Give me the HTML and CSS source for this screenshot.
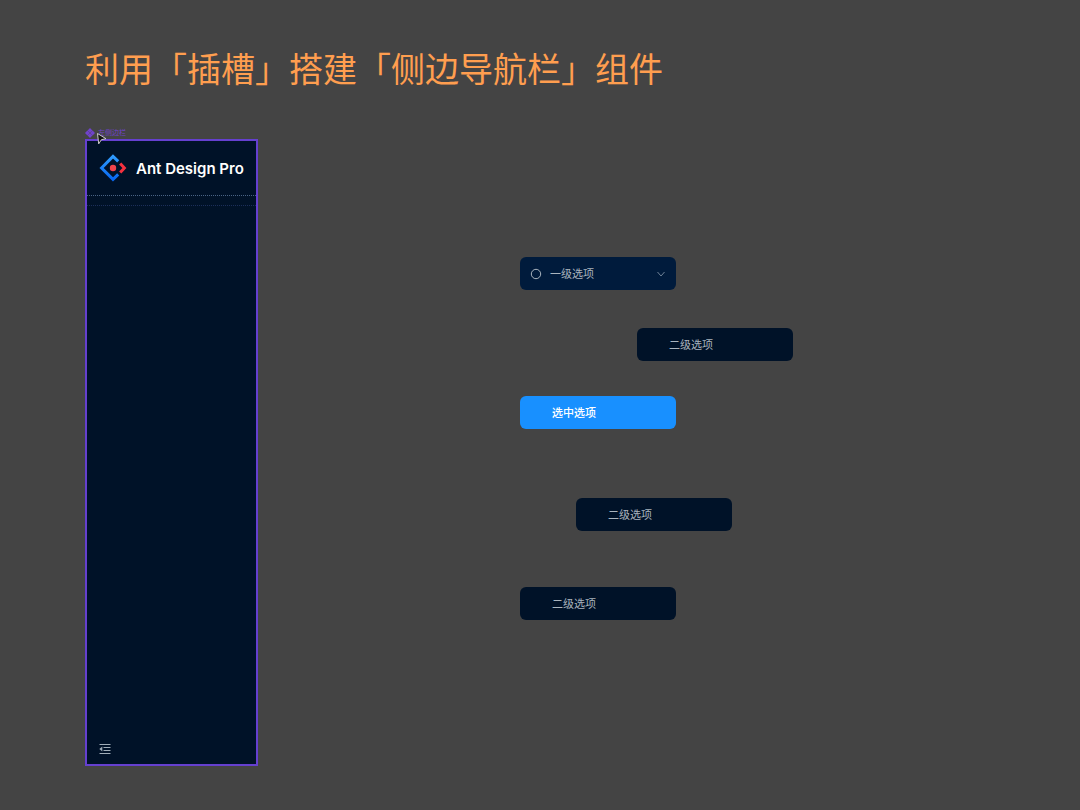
FILE: index.html
```html
<!DOCTYPE html>
<html lang="zh-CN">
<head>
    <meta charset="UTF-8">
    <meta name="viewport" content="width=device-width, initial-scale=1.0">
    <title>利用「插槽」搭建「侧边导航栏」组件</title>
    <link rel="stylesheet" href="styles.css">
</head>
<body>
    <div class="page">
        <h1 class="title">利用「插槽」搭建「侧边导航栏」组件</h1>

        <div class="component-name">
            <svg class="component-icon" viewBox="0 0 10 10" aria-hidden="true">
                <path d="M5 0l2.4 2.4L5 4.8 2.6 2.4zM5 5.2l2.4 2.4L5 10 2.6 7.6zM2.4 2.6L4.8 5 2.4 7.4 0 5zM7.6 2.6L10 5 7.6 7.4 5.2 5z"/>
            </svg>
            <span>左侧边栏</span>
            <svg class="cursor" viewBox="0 0 12 14" aria-hidden="true">
                <path d="M1.5 1.5l8.5 5.2-4.6 1-2.7 4.2z"/>
            </svg>
        </div>

        <aside class="sidebar">
            <header class="brand">
                <svg class="logo" viewBox="0 0 28 28" aria-hidden="true">
                    <defs>
                        <linearGradient id="blue" x1="0" y1="0" x2="0" y2="1">
                            <stop offset="0" stop-color="#2f9bff"/>
                            <stop offset="1" stop-color="#0868f0"/>
                        </linearGradient>
                    </defs>
                    <path class="logo-blue" d="M19.2 7.4L14 2.4 2.6 14 14 25.4l5.2-5"/>
                    <path class="logo-red" d="M21.2 9.4l4.2 4.6-4.2 4.6"/>
                    <circle cx="14" cy="14" r="3.2"/>
                </svg>
                <span>Ant Design Pro</span>
            </header>
            <div class="slot"></div>
            <footer class="sidebar-footer">
                <button class="collapse" type="button" aria-label="收起侧边栏">
                    <svg viewBox="0 0 12 12" aria-hidden="true">
                        <path class="lines" d="M0.5 1.5h11M4.5 4.5h7M4.5 7.5h7M0.5 10.5h11"/>
                        <path class="arrow" d="M0.3 6l3-2.4v4.8z"/>
                    </svg>
                </button>
            </footer>
        </aside>

        <button class="menu-item level-one" type="button">
            <svg class="circle" viewBox="0 0 12 12" aria-hidden="true"><circle cx="6" cy="6" r="4.7"/></svg>
            <span>一级选项</span>
            <svg class="chevron" viewBox="0 0 10 10" aria-hidden="true"><path d="M1.5 3L5 7l3.5-4"/></svg>
        </button>
        <button class="menu-item option-a" type="button">二级选项</button>
        <button class="menu-item selected" type="button">选中选项</button>
        <button class="menu-item option-b" type="button">二级选项</button>
        <button class="menu-item option-c" type="button">二级选项</button>
    </div>
</body>
</html>
```

FILE: styles.css
```css
* {
    box-sizing: border-box;
}
body {
    margin: 0;
    background: #444;
    font-family: Inter, "Noto Sans CJK SC", sans-serif;
}
.page {
    position: relative;
    display: flex;
    flex-direction: column;
    align-items: flex-start;
    min-height: 100vh;
    padding: 45px 85px 44px;
}
.title {
    margin: 0 0 32px;
    color: #ff9e4f;
    font-size: 34px;
    font-weight: 400;
    line-height: 50px;
    white-space: nowrap;
}
.component-name {
    position: relative;
    display: flex;
    align-items: center;
    gap: 3px;
    height: 12px;
    color: #7043cc;
    font-size: 7px;
    line-height: 12px;
}
.component-icon {
    width: 10px;
    height: 10px;
    fill: #7043cc;
}
.cursor {
    position: absolute;
    left: 11px;
    top: 5px;
    width: 12px;
    height: 14px;
    fill: #111;
    stroke: #ccc;
}
.sidebar {
    flex: 1;
    display: flex;
    flex-direction: column;
    background: #001228;
    border: 2px solid #6540d0;
}
.brand {
    display: flex;
    align-items: center;
    gap: 9px;
    height: 55px;
    padding: 0 12px;
    border-bottom: 1px dotted #4a6485;
    color: #fff;
    font-size: 15px;
    font-weight: 600;
    white-space: nowrap;
}
.logo {
    width: 28px;
    height: 28px;
    fill: none;
    stroke-width: 3;
}
.logo-blue {
    stroke: url(#blue);
}
.logo-red {
    stroke: #f5313f;
}
.logo circle {
    fill: #f0444c;
}
.slot {
    flex: 1;
    margin-top: 9px;
    border-top: 1px dotted #1c2f5a;
}
.sidebar-footer {
    display: flex;
    padding: 9px 12px;
}
.collapse {
    display: flex;
    padding: 0;
    background: none;
    border: 0;
    cursor: pointer;
}
.collapse svg {
    width: 12px;
    height: 12px;
}
.lines {
    stroke: #a0adb8;
}
.arrow {
    fill: #a0adb8;
}

/* 画布上的菜单选项 */
.menu-item {
    position: absolute;
    display: flex;
    align-items: center;
    width: 156px;
    height: 33px;
    padding: 0 10px 0 32px;
    background: #001228;
    border: 0;
    border-radius: 6px;
    color: #a9b4be;
    font-family: inherit;
    font-size: 11px;
    line-height: 16px;
    cursor: pointer;
}
.level-one {
    left: 520px;
    top: 257px;
    gap: 8px;
    padding-left: 10px;
    background: #001b3c;
}
.option-a {
    left: 637px;
    top: 328px;
}
.selected {
    left: 520px;
    top: 396px;
    background: #1890ff;
    color: #fff;
    font-weight: 500;
}
.option-b {
    left: 576px;
    top: 498px;
}
.option-c {
    left: 520px;
    top: 587px;
}
.circle {
    width: 12px;
    height: 12px;
    fill: none;
    stroke: #a9b4be;
}
.chevron {
    width: 10px;
    height: 10px;
    margin-left: auto;
    fill: none;
    stroke: #6f8297;
}
```
